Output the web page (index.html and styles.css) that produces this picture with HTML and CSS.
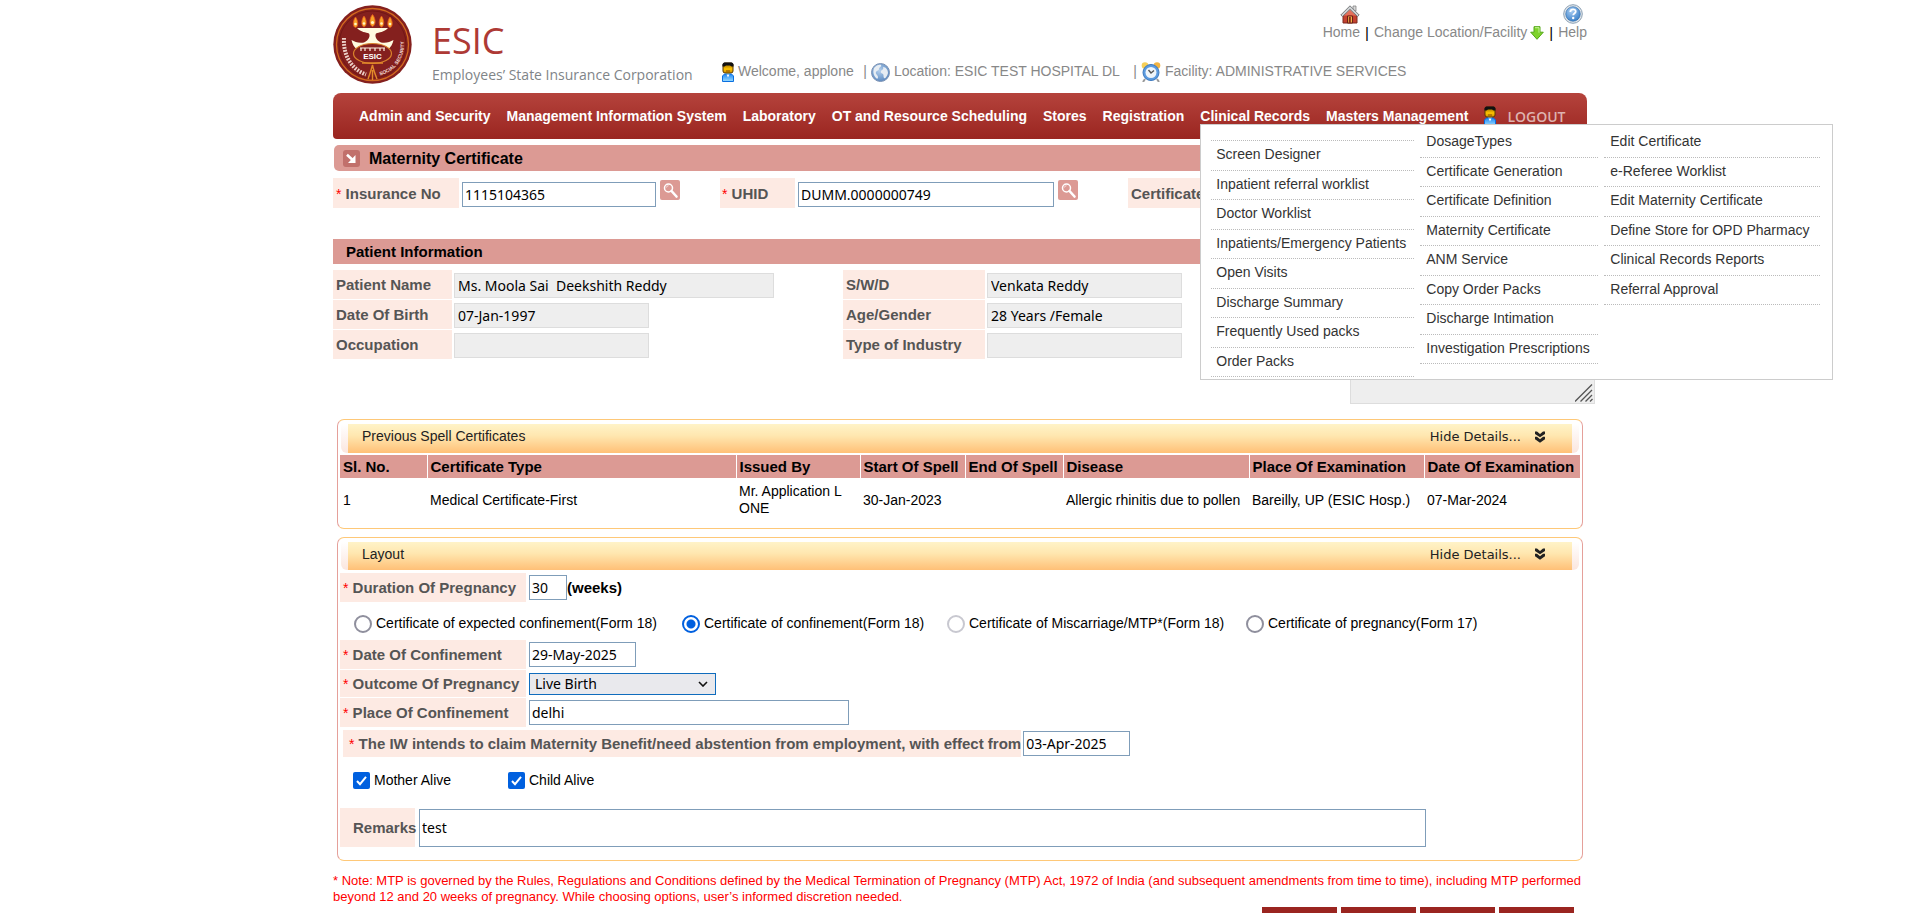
FILE: index.html
```html
<!DOCTYPE html>
<html lang="en">
<head>
<meta charset="utf-8">
<title>Maternity Certificate</title>
<link rel="stylesheet" href="styles.css">
</head>
<body>
<svg class="sprite" aria-hidden="true">
  <defs>
    <linearGradient id="gFace" x1="0" y1="0" x2="0" y2="1"><stop offset="0" stop-color="#8a5a00"/><stop offset=".6" stop-color="#ffc400"/><stop offset="1" stop-color="#c98a00"/></linearGradient>
    <linearGradient id="gShirt" x1="0" y1="0" x2="0" y2="1"><stop offset="0" stop-color="#1d86f5"/><stop offset="1" stop-color="#9adcff"/></linearGradient>
    <radialGradient id="gBlue" cx=".4" cy=".3" r=".8"><stop offset="0" stop-color="#a9cdf2"/><stop offset="1" stop-color="#2f78c4"/></radialGradient>
    <radialGradient id="gGlobe" cx=".45" cy=".4" r=".7"><stop offset="0" stop-color="#b4d0ee"/><stop offset="1" stop-color="#4f7fb9"/></radialGradient>
  </defs>
  <symbol id="i-user" viewBox="0 0 12 20">
    <rect x="1" y="1" width="10" height="10" rx="2" fill="url(#gFace)" stroke="#5a3a00"/>
    <path d="M0.5 4.5V2L2 0.5h8L11.5 2v2.5H9.5L8 3.5H4L2.5 4.5z" fill="#111"/>
    <path d="M4 9h4" stroke="#8a4b00"/>
    <path d="M4 11h4v2H4z" fill="#d99a00"/>
    <path d="M0.5 19.500V14l2-2h7l2 2v5.500z" fill="url(#gShirt)" stroke="#0a6fe0"/>
    <path d="M4.500 12.500h3l-1.500 3z" fill="#fff"/>
  </symbol>
  <symbol id="i-chev" viewBox="0 0 10 12">
    <path d="M0 0.500L2 0.500L5 3L8 0.500L10 0.500V3L5 6.200L0 3z M0 5.800h2L5 8.300L8 5.800h2V8.300L5 11.700L0 8.300z" fill="#222"/>
  </symbol>
  <symbol id="i-search" viewBox="0 0 20 20">
    <rect width="20" height="20" rx="2" fill="#dc9a94"/>
    <circle cx="8.500" cy="8" r="4" fill="#dc9a94" stroke="#fff" stroke-width="1.500"/>
    <path d="M6.500 7.500a2 2 0 0 1 2-1.800" fill="none" stroke="#f6dcda"/>
    <path d="M11.500 11l5 5.500" stroke="#fff" stroke-width="2.600" stroke-linecap="round"/>
  </symbol>
</svg>

<div class="page">
  <header class="top">
    <div class="brand">
      <svg class="logo" viewBox="0 0 79 79" role="img" aria-label="ESIC emblem">
        <defs><path id="arcR" d="M47 70.500A31.500 31.500 0 0 0 70.500 34"/></defs>
        <circle cx="39.500" cy="39.500" r="39.200" fill="#84201e"/>
        <circle cx="39.500" cy="39.500" r="36" fill="none" stroke="#d2691e" stroke-width="1.300"/>
        <circle cx="39.500" cy="39.500" r="33.500" fill="none" stroke="#6d1413" stroke-width=".8"/>
        <g fill="#f7a428" stroke="#e2521b" stroke-width=".8">
          <path d="M22.500 12c3 4 3 10 0 10.500c-3-.5-3-6.500 0-10.500z"/>
          <path d="M31 11c3 4 3 10 0 11c-3-1-3-7 0-11z"/>
          <path d="M39.500 9.500c3.500 4 3.500 11 0 12c-3.500-1-3.500-8 0-12z"/>
          <path d="M48.500 11c3 4 3 10 0 11c-3-1-3-7 0-11z"/>
          <path d="M57 12c3 4 3 10 0 10.500c-3-.5-3-6.500 0-10.500z"/>
        </g>
        <g fill="#fff6c4"><circle cx="22.500" cy="19" r="1.300"/><circle cx="31" cy="18.500" r="1.300"/><circle cx="39.500" cy="17.500" r="1.600"/><circle cx="48.500" cy="18.500" r="1.300"/><circle cx="57" cy="19" r="1.300"/></g>
        <path d="M24 23C28 27.500 33 27 36 28.500C37.500 31 36 35 31 37.500C26 38.500 22 37 18.500 35C20 43 26 48 39.500 48S59 43 60.500 35C57 37 53 38.500 48 37.500C43 35 41.500 31 43 28.500C46 27 51 27.500 55 23z" fill="#fffbe0"/>
        <ellipse cx="39.500" cy="48.500" rx="19" ry="10" fill="#84201e" stroke="#d9822b" stroke-width="1.200"/>
        <path d="M27 43h25M28 46v-3M32 46v-3M37 46v-3M42 46v-3M47 46v-3M51 46v-3" stroke="#fff3e4" stroke-width="1.200" fill="none"/>
        <text x="39.500" y="53.800" text-anchor="middle" class="logo-name">ESIC</text>
        <path d="M29 58h21M35 74c2-5 3-9 4.500-14c1 5 2.500 9 4.500 14M39.500 65v10" stroke="#e28a2b" stroke-width="1.400" fill="none"/>
        <path d="M11 33C10 50 18 64 33 69.500" fill="none" stroke="#ecd0c8" stroke-width="4" stroke-dasharray="1.800 1.200"/>
        <text class="logo-ring"><textPath href="#arcR">SOCIAL SECURITY</textPath></text>
      </svg>
      <div class="brand-text">
        <div class="brand-name">ESIC</div>
        <div class="brand-sub">Employees’ State Insurance Corporation</div>
      </div>
    </div>
    <div class="top-right">
      <nav class="links">
        <a class="link stacked home" href="#">
          <svg width="20" height="20" viewBox="0 0 20 20" aria-hidden="true">
            <path d="M3 10h14v9H3z" fill="#c4412f" stroke="#7c2a20"/>
            <path d="M3.500 11.500l6.500-6l6.500 6z" fill="#e3705b"/>
            <path d="M13 2h3v5h-3z" fill="#d9d9d9" stroke="#777" stroke-width=".7"/>
            <path d="M0.800 11L10 1.800L19.200 11l-1.700 1.500L10 5.300L2.500 12.500z" fill="#cfd2d4" stroke="#6d7073" stroke-width=".9"/>
            <path d="M7.500 12h5v7h-5z" fill="#f1b64a" stroke="#6d1f14"/><path d="M9.800 13v6" stroke="#8a2c1d" stroke-width="2"/>
          </svg>
          <span>Home</span>
        </a>
        <span class="bar">|</span>
        <a class="link change" href="#">Change Location/Facility
          <svg width="14" height="14" viewBox="0 0 14 14" aria-hidden="true"><path d="M4 .7h6v5.500h3.300L7 13.300L.7 6.200H4z" fill="#7fd32c" stroke="#54a818"/><path d="M5 1.700h4v5" fill="none" stroke="#c7f39a"/></svg>
        </a>
        <span class="bar">|</span>
        <a class="link stacked" href="#">
          <svg width="20" height="20" viewBox="0 0 20 20" aria-hidden="true"><circle cx="10" cy="10" r="9.300" fill="#e4e7ea" stroke="#8ba0b4"/><circle cx="10" cy="10" r="7.300" fill="url(#gBlue)" stroke="#2c6aa8" stroke-width=".6"/><path d="M7.300 8c0-3.600 5.600-3.500 5.400-.4c-.1 1.900-2.500 1.900-2.500 3.700" fill="none" stroke="#fff" stroke-width="1.800"/><circle cx="10.200" cy="14" r="1.200" fill="#fff"/></svg>
          <span>Help</span>
        </a>
      </nav>
      <div class="status">
        <div class="status-item"><svg width="12" height="20" aria-hidden="true"><use href="#i-user"/></svg><span>Welcome, applone</span><span class="sep">|</span></div>
        <div class="status-item"><svg width="19" height="19" viewBox="0 0 19 19" aria-hidden="true"><circle cx="9.500" cy="9.500" r="9" fill="url(#gGlobe)" stroke="#7d93b4"/><path d="M3 5c2-3 6-4 7-3c1 2-2 2-2 4s-2 1-3 3s2 3 2 5s-1 2-2 1C2 12 2 8 3 5zM12 4c3 0 5 3 5 6c-1 4-3 6-4 5s0-3-1-4s-3-1-2-3s3-1 2-4z" fill="#e7edf3"/></svg><span>Location: ESIC TEST HOSPITAL DL</span><span class="sep">|</span></div>
        <div class="status-item"><svg width="20" height="20" viewBox="0 0 20 20" aria-hidden="true"><path d="M4 17l-2 3M16 17l2 3" stroke="#9a9a9a" stroke-width="2"/><circle cx="4" cy="3.500" r="3.300" fill="#f6cf58"/><circle cx="16" cy="3.500" r="3.300" fill="#f2b443"/><circle cx="10" cy="10.500" r="8" fill="#5b9be0" stroke="#3c78bd"/><circle cx="10" cy="10.500" r="5.500" fill="#eef5fb"/><path d="M7.500 8l2.500 3l3-2.500" stroke="#555" stroke-width="1.400" fill="none"/></svg><span>Facility: ADMINISTRATIVE SERVICES</span></div>
      </div>
    </div>
  </header>

  <nav class="menu">
    <a href="#">Admin and Security</a>
    <a href="#">Management Information System</a>
    <a href="#">Laboratory</a>
    <a href="#">OT and Resource Scheduling</a>
    <a href="#">Stores</a>
    <a href="#">Registration</a>
    <div class="menu-open">
      <a href="#">Clinical Records</a>
      <div class="dropdown">
        <div class="drop-col first">
          <a href="#">Screen Designer</a><a href="#">Inpatient referral worklist</a><a href="#">Doctor Worklist</a><a href="#">Inpatients/Emergency Patients</a><a href="#">Open Visits</a><a href="#">Discharge Summary</a><a href="#">Frequently Used packs</a><a href="#">Order Packs</a>
        </div>
        <div class="drop-col">
          <a href="#">DosageTypes</a><a href="#">Certificate Generation</a><a href="#">Certificate Definition</a><a href="#">Maternity Certificate</a><a href="#">ANM Service</a><a href="#">Copy Order Packs</a><a href="#">Discharge Intimation</a><a href="#">Investigation Prescriptions</a>
        </div>
        <div class="drop-col">
          <a href="#">Edit Certificate</a><a href="#">e-Referee Worklist</a><a href="#">Edit Maternity Certificate</a><a href="#">Define Store for OPD Pharmacy</a><a href="#">Clinical Records Reports</a><a href="#">Referral Approval</a>
        </div>
      </div>
    </div>
    <a href="#">Masters Management</a>
    <a class="logout" href="#"><svg width="12" height="20" aria-hidden="true"><use href="#i-user"/></svg><span>LOGOUT</span></a>
  </nav>

  <main>
    <h1 class="title"><svg width="17" height="17" viewBox="0 0 17 17" aria-hidden="true"><rect width="17" height="17" rx="3" fill="#c1706b"/><path d="M4 4.800l6 5.500" stroke="#fff" stroke-width="2.600"/><path d="M12.500 5v8H5z" fill="#fff"/></svg>Maternity Certificate</h1>

    <form>
      <div class="search-row">
        <div class="pair">
          <label class="lbl w-ins" for="ins"><i>*</i> Insurance No</label>
          <input class="box w-194" id="ins" value="1115104365">
          <button class="find" type="button" aria-label="Find insurance number"><svg width="20" height="20" aria-hidden="true"><use href="#i-search"/></svg></button>
        </div>
        <div class="pair uhid">
          <label class="lbl w-75" for="uhid"><i>*</i> UHID</label>
          <input class="box w-256" id="uhid" value="DUMM.0000000749">
          <button class="find" type="button" aria-label="Find UHID"><svg width="20" height="20" aria-hidden="true"><use href="#i-search"/></svg></button>
        </div>
        <div class="lbl cert">Certificate</div>
      </div>

      <h2 class="section">Patient Information</h2>
      <div class="patient">
        <div class="fields f-left">
          <label class="lbl" for="pn">Patient Name</label><input class="box ro w-320" id="pn" readonly value="Ms. Moola Sai&nbsp; Deekshith Reddy">
          <label class="lbl" for="dob">Date Of Birth</label><input class="box ro w-195" id="dob" readonly value="07-Jan-1997">
          <label class="lbl" for="occ">Occupation</label><input class="box ro w-195" id="occ" readonly>
        </div>
        <div class="fields f-mid">
          <label class="lbl" for="swd">S/W/D</label><input class="box ro w-195" id="swd" readonly value="Venkata Reddy">
          <label class="lbl" for="age">Age/Gender</label><input class="box ro w-195" id="age" readonly value="28 Years /Female">
          <label class="lbl" for="ind">Type of Industry</label><input class="box ro w-195" id="ind" readonly>
        </div>
        <div class="area-wrap"><textarea class="area" readonly aria-label="Address"></textarea>
          <svg class="grip" width="18" height="18" viewBox="0 0 18 18" aria-hidden="true"><path d="M0 17.500L17 0.500M5.500 17.500L17 6M10.500 17.500L17 11M15 17.500L17.500 15" stroke="#555" stroke-width="1.300"/></svg>
        </div>
      </div>

      <section class="panel spells">
        <div class="panel-head"><div class="panel-bar"><span>Previous Spell Certificates</span><button type="button" class="hide">Hide Details...<svg width="10" height="12" aria-hidden="true"><use href="#i-chev"/></svg></button></div></div>
        <table class="grid">
          <colgroup><col class="c1"><col class="c2"><col class="c3"><col class="c4"><col class="c5"><col class="c6"><col class="c7"><col></colgroup>
          <thead><tr><th>Sl. No.</th><th>Certificate Type</th><th>Issued By</th><th>Start Of Spell</th><th>End Of Spell</th><th>Disease</th><th>Place Of Examination</th><th>Date Of Examination</th></tr></thead>
          <tbody><tr><td>1</td><td>Medical Certificate-First</td><td>Mr. Application L ONE</td><td>30-Jan-2023</td><td></td><td>Allergic rhinitis due to pollen</td><td>Bareilly, UP (ESIC Hosp.)</td><td>07-Mar-2024</td></tr></tbody>
        </table>
      </section>

      <section class="panel layout">
        <div class="panel-head"><div class="panel-bar"><span>Layout</span><button type="button" class="hide">Hide Details...<svg width="10" height="12" aria-hidden="true"><use href="#i-chev"/></svg></button></div></div>
        <div class="line">
          <label class="lbl w-186" for="dur"><i>*</i> Duration Of Pregnancy</label><input class="box w-38" id="dur" value="30"><b class="unit">(weeks)</b>
        </div>
        <div class="radios">
          <label><input type="radio" name="kind">Certificate of expected confinement(Form 18)</label>
          <label><input type="radio" name="kind" checked>Certificate of confinement(Form 18)</label>
          <label><input type="radio" name="kind" disabled>Certificate of Miscarriage/MTP*(Form 18)</label>
          <label><input type="radio" name="kind">Certificate of pregnancy(Form 17)</label>
        </div>
        <div class="line"><label class="lbl w-186" for="doc"><i>*</i> Date Of Confinement</label><input class="box w-107" id="doc" value="29-May-2025"></div>
        <div class="line slim"><label class="lbl w-186" for="out"><i>*</i> Outcome Of Pregnancy</label><select class="pick" id="out"><option>Live Birth</option></select></div>
        <div class="line"><label class="lbl w-186" for="poc"><i>*</i> Place Of Confinement</label><input class="box w-320" id="poc" value="delhi"></div>
        <div class="line claim"><label class="lbl" for="eff"><i>*</i> The IW intends to claim Maternity Benefit/need abstention from employment, with effect from</label><input class="box w-107" id="eff" value="03-Apr-2025"></div>
        <div class="checks">
          <label><input type="checkbox" checked>Mother Alive</label>
          <label><input type="checkbox" checked>Child Alive</label>
        </div>
        <div class="line remarks"><label class="lbl w-75" for="rem">Remarks</label><input class="box" id="rem" value="test"></div>
      </section>

      <p class="note">* Note: MTP is governed by the Rules, Regulations and Conditions defined by the Medical Termination of Pregnancy (MTP) Act, 1972 of India (and subsequent amendments from time to time), including MTP performed<br>beyond 12 and 20 weeks of pregnancy. While choosing options, user’s informed discretion needed.</p>
      <div class="actions">
        <button type="button" aria-label="Save"></button><button type="button" aria-label="Print"></button><button type="button" aria-label="Clear"></button><button type="button" aria-label="Close"></button>
      </div>
    </form>
  </main>
</div>
</body>
</html>
```

FILE: styles.css
```css
* { box-sizing: border-box; }
body { margin: 0; height: 100vh; overflow: hidden; background: #fff; color: #000; font: 14px/17px "Liberation Sans", Arial, sans-serif; }
a { text-decoration: none; color: inherit; }
button, input, select, textarea { font: inherit; margin: 0; }
svg { flex: none; display: block; }
.sprite { position: absolute; width: 0; height: 0; }
.page { max-width: 1254px; margin: 0 auto; }

/* header */
.top { display: flex; height: 93px; }
.brand { display: flex; width: 389px; padding-top: 5px; gap: 20px; }
.logo { width: 79px; height: 79px; }
.logo-name { font: bold 8px "Liberation Sans", Arial, sans-serif; fill: #fff; }
.logo-ring { font: bold 5px "Liberation Sans", Arial, sans-serif; fill: #f3dcd6; }
.brand-text { padding-top: 13px; white-space: nowrap; }
.brand-name { font: 36px/46px "Open Sans", sans-serif; color: #ae3a35; }
.brand-sub { font: 14px/22px "Open Sans", sans-serif; color: #808488; }
.top-right { flex: 1; display: flex; flex-direction: column; color: #888; }
.links { display: flex; align-self: flex-end; align-items: flex-end; gap: 5px; padding-top: 3px; height: 41px; }
.link { display: flex; align-items: center; }
.stacked { flex-direction: column; }
.home { align-items: flex-end; }
.change { gap: 3px; }
.bar { color: #000; font-size: 15px; }
.status { display: grid; grid-template-columns: 149px 270px auto; margin-top: 20px; height: 22px; }
.status-item { display: flex; align-items: center; gap: 4px; white-space: nowrap; }
.status-item span { padding-bottom: 2px; }
.status-item .sep { margin-left: auto; padding-right: 4px; }

/* navigation */
.menu { display: flex; gap: 16px; height: 46px; padding: 13px 8px 0 26px; border-radius: 8px 8px 4px 4px; background: linear-gradient(#b5433c, #9a2520); color: #fff; font-weight: bold; line-height: 20px; white-space: nowrap; }
.menu .logout { display: flex; gap: 11px; color: #deb3b0; font: 600 14px/22px "Open Sans", sans-serif; }
.menu-open { position: relative; }
.dropdown { position: absolute; z-index: 5; left: 0; top: 18px; width: 633px; height: 256px; padding: 3px 12px 3px 10px; display: grid; grid-template-columns: 203px 178px 216px; column-gap: 6px; align-items: start; background: #fff; border: 1px solid #ccc; color: #333; font-weight: normal; }
.drop-col { display: grid; grid-template-rows: repeat(8, 1fr); height: 236px; }
.drop-col a { display: flex; align-items: center; padding-left: 6px; padding-bottom: 2px; border-bottom: 1px dotted #bbb; }
.drop-col.first { margin-top: 12px; height: 237px; border-top: 1px dotted #bbb; }
.drop-col.first a { padding-left: 5px; }

/* headings */
.title { display: flex; align-items: center; gap: 9px; height: 26px; margin: 6px 0 7px 1px; padding-left: 9px; border-radius: 5px; background: #dc9a94; font-size: 16px; }
.section { height: 25px; margin: 31px 0 6px; padding-left: 13px; background: #dc9a94; font-size: 15px; line-height: 25px; }

/* fields */
.lbl { display: block; padding-left: 3px; background: #fdeae3; color: #555; font-weight: bold; font-size: 15px; line-height: 29px; white-space: nowrap; }
.lbl i { font: 14px "Liberation Sans", Arial, sans-serif; color: #f00; }
.box { height: 25px; padding: 0 2px; border: 1px solid #7f9db9; background: #fff; color: #000; font: 14px "Noto Sans", sans-serif; border-radius: 0; }
.ro { padding: 0 3px; background: #eee; border-color: #ddd; }
.w-38 { width: 38px; }
.w-75 { width: 75px; }
.w-107 { width: 107px; }
.w-ins { width: 126px; }
.w-186 { width: 186px; }
.w-194 { width: 194px; }
.w-195 { width: 195px; }
.w-256 { width: 256px; }
.w-320 { width: 320px; }
.search-row { display: flex; }
.pair { display: flex; gap: 3px; width: 387px; }
.pair .box { margin-top: 4px; }
.pair .lbl, .cert { height: 30px; line-height: 31px; }
.uhid { width: 408px; }
.uhid .lbl { padding-left: 2px; }
.find { width: 20px; height: 20px; margin: 2px 0 0 1px; padding: 0; border: 0; background: none; }
.cert { flex: 1; }
.patient { display: flex; height: 149px; }
.fields { display: grid; flex: none; grid-auto-rows: 29px; gap: 1px 2px; align-content: start; }
.fields .box { align-self: end; margin-bottom: 1px; }
.f-left { grid-template-columns: 119px 320px; width: 510px; }
.f-mid { grid-template-columns: 142px 195px; width: 507px; }
.area-wrap { position: relative; flex: none; width: 245px; height: 134px; padding-top: 3px; }
.area { display: block; width: 100%; height: 100%; resize: none; border: 1px solid #ddd; background: #eee; }
.grip { position: absolute; right: 2px; bottom: 2px; }

/* panels */
.panel { margin: 0 4px 8px; padding: 4px 2px 0; border: 1px solid #e5a09a; border-top-color: #fec878; border-bottom-color: #fec878; border-radius: 7px; }
.panel-head { padding: 0 7px; margin: 0 1px; border-radius: 0 0 6px 6px; background: linear-gradient(#fff, #fbe6de); }
.panel-bar { display: flex; justify-content: space-between; align-items: center; height: 29px; padding: 0 27px 4px 14px; background: linear-gradient(#fff3c8, #ffe7b0 40%, #ffc077); color: #222; }
.hide { display: flex; align-items: center; gap: 14px; padding: 0; border: 0; background: none; color: #222; font: 13px "DejaVu Sans", Verdana, sans-serif; }
.spells { height: 110px; }
.grid { width: 100%; margin-top: 2px; border-collapse: collapse; table-layout: fixed; }
.grid th { height: 23px; padding: 0 0 0 3px; border-right: 1px solid #fff; background: #dc9a94; background-clip: padding-box; font-size: 15px; text-align: left; white-space: nowrap; }
.grid th:last-child { border-right: 0; }
.grid td { height: 44px; padding: 0 0 0 3px; }
.grid td:nth-child(3) { padding-right: 10px; }
.c1 { width: 87px; } .c2 { width: 309px; } .c3 { width: 124px; } .c4 { width: 105px; } .c5 { width: 98px; } .c6 { width: 186px; } .c7 { width: 175px; }

.layout { margin-bottom: 12px; padding-bottom: 13px; }
.layout .panel-bar { height: 28px; }
.line { display: flex; gap: 3px; align-items: center; margin-bottom: 1px; }
.layout .panel-head + .line { margin-top: 3px; }
.slim .lbl { line-height: 27px; }
.unit { font-size: 15px; margin-left: -3px; }
.radios { display: grid; grid-template-columns: 328px 265px 299px auto; height: 37px; padding-left: 14px; }
.radios label, .checks label { display: flex; align-items: center; gap: 4px; }
.radios label { padding-top: 4px; }
.radios input { appearance: none; width: 18px; height: 18px; border: 2px solid #8f8f9d; border-radius: 50%; background: #fff; }
.radios input:checked { border-color: #0060df; background: radial-gradient(#0060df 4px, #fff 5px); }
.radios input:disabled { border-color: #c8c8d0; }
.pick { width: 187px; height: 22px; padding: 0 18px 0 5px; appearance: none; border: 1px solid #0f6cbd; border-radius: 0; color: #000; font: 14px/20px "Noto Sans", sans-serif; background: #e9e9ed url("data:image/svg+xml,%3Csvg xmlns='http://www.w3.org/2000/svg' width='10' height='6'%3E%3Cpath d='M1 1l4 4l4-4' fill='none' stroke='%23111' stroke-width='1.6'/%3E%3C/svg%3E") no-repeat right 7px center; }
.claim { padding-left: 3px; margin-top: 3px; gap: 2px; }
.claim .lbl { padding-left: 6px; line-height: 27px; }
.checks { display: grid; grid-template-columns: 155px auto; padding: 14px 0 19px 13px; }
.checks input { appearance: none; width: 17px; height: 17px; border-radius: 2px; background: #0060df url("data:image/svg+xml,%3Csvg xmlns='http://www.w3.org/2000/svg' width='17' height='17'%3E%3Cpath d='M4 9l3 3.200l6-7.400' fill='none' stroke='%23fff' stroke-width='2'/%3E%3C/svg%3E"); }
.remarks { gap: 4px; margin: 0; }
.remarks .lbl { padding-left: 13px; line-height: 39px; }
.remarks .box { flex: 1; height: 38px; margin-right: 154px; }

.note { margin: 0; color: #f00; font-size: 13px; line-height: 16px; }
.actions { display: flex; justify-content: flex-end; gap: 4px; margin-top: 2px; padding-right: 13px; }
.actions button { width: 75px; height: 24px; padding: 0; border: 0; background: #9a2520; }
```
